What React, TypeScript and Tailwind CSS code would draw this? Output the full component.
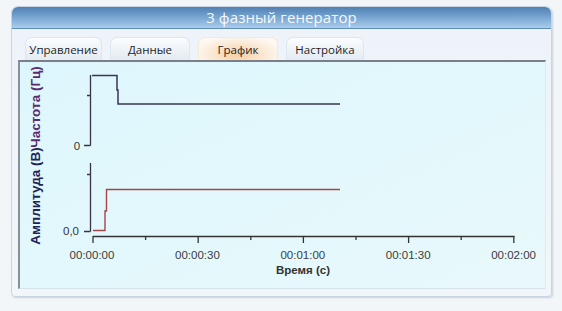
import React from 'react';

const tabs = [
    { id: 'ctrl', label: 'Управление', w: 'w-[77px]' },
    { id: 'data', label: 'Данные', w: 'w-[80px]' },
    { id: 'graph', label: 'График', w: 'w-[80px]' },
    { id: 'cfg', label: 'Настройка', w: 'w-[78px]' },
];

// x axis: 00:00:00 at x=93, 00:02:00 at x=514 (page coords)
const xTicks = Array.from({ length: 9 }, (_, i) => 93 + i * 52.6);
const xLabels = ['00:00:00', '00:00:30', '00:01:00', '00:01:30', '00:02:00'];
const font = "'Liberation Sans', Arial, sans-serif";

const Chart: React.FC = () => (
    <svg className="absolute inset-0" width="526" height="227" viewBox="20 62 526 227">
        {/* Y axis labels (overlapping, as in the original) */}
        <text
            x={35} y={107}
            transform="rotate(-90 35 107)"
            textAnchor="middle" dominantBaseline="central"
            fontFamily={font} fontWeight="bold" fontSize="13.5"
            fill="#5b2a6e"
        >
            Частота (Гц)
        </text>
        <text
            x={35} y={196}
            transform="rotate(-90 35 196)"
            textAnchor="middle" dominantBaseline="central"
            fontFamily={font} fontWeight="bold" fontSize="13.5"
            fill="#1f2257"
        >
            Амплитуда (В)
        </text>

        {/* TOP PLOT (frequency) */}
        <path d="M90.5 75 V145.5 M84 145.5 H90.5 M87 95.5 H90.5" stroke="#3b3346" strokeWidth="1.3" fill="none" />
        <text x={77} y={146} textAnchor="middle" dominantBaseline="central" fontFamily={font} fontSize="11.5" fill="#333">0</text>
        <path d="M92 75.5 H117 V90 H118 V104 H340" stroke="#3a3650" strokeWidth="1.5" fill="none" />

        {/* BOTTOM PLOT (amplitude) */}
        <path d="M90.5 163 V231.5 M84 231.5 H90.5 M87 174.5 H90.5" stroke="#3b3346" strokeWidth="1.3" fill="none" />
        <text x={71} y={231} textAnchor="middle" dominantBaseline="central" fontFamily={font} fontSize="11.5" fill="#333">0,0</text>
        <path d="M93 230.5 H105 V211 H106.5 V189.5 H340" stroke="#a3474a" strokeWidth="1.4" fill="none" />

        {/* X AXIS */}
        <path d="M93 236.5 H514.5" stroke="#333" strokeWidth="1.3" fill="none" />
        {xTicks.map((x, i) => (
            <line key={i} x1={x} x2={x} y1={236} y2={i % 2 === 0 ? 243 : 240} stroke="#333" strokeWidth="1.3" />
        ))}
        {xLabels.map((l, i) => (
            <text key={l} x={92 + i * 105.4} y={255} textAnchor="middle" dominantBaseline="central" fontFamily={font} fontSize="11.5" fill="#3a3a3a">
                {l}
            </text>
        ))}
        <text x={303} y={270} textAnchor="middle" dominantBaseline="central" fontFamily={font} fontWeight="bold" fontSize="11.5" fill="#333">
            Время (с)
        </text>
    </svg>
);

export default function App() {
    const active = 'graph';

    return (
        <div className="w-[562px] h-[311px] bg-[#f3f6f9] pt-[6px] pl-[11px] overflow-hidden" style={{ fontFamily: "'Open Sans', 'Noto Sans', sans-serif" }}>
            {/* WINDOW */}
            <div className="w-[541px] h-[291px] rounded-t-[7px] rounded-b-[4px] border border-[#c9d6e2] bg-gradient-to-b from-[#edf3f9] to-[#f1f6fb] shadow-[1px_1px_2px_rgba(120,140,160,0.35)] flex flex-col">
                {/* TITLE BAR */}
                <div className="h-[22px] rounded-t-[6px] bg-gradient-to-b from-[#4f80b3] via-[#7aa6d2] to-[#a9cdec] border-b border-[#5f8cb9] flex items-center justify-center">
                    <span className="text-[15px] leading-none text-white/95 tracking-[0.1px]">3 фазный генератор</span>
                </div>

                {/* TABS */}
                <div className="flex gap-[8px] pl-[13px] pt-[8px] h-[31px]">
                    {tabs.map(t => (
                        <div
                            key={t.id}
                            className={`${t.w} h-[23px] rounded-t-[7px] border border-b-0 flex items-end justify-center pb-[2px] text-[11.5px] text-[#1e1e1e] ${
                                t.id === active
                                    ? 'border-[#f3ead8] bg-[radial-gradient(ellipse_at_50%_75%,#f6cfa4_0%,#fae7d2_45%,#fdf8f1_80%)]'
                                    : 'border-[#dde7f0] bg-gradient-to-b from-[#fbfdff] via-[#eef3f8] to-[#e3ebf3]'
                            }`}
                        >
                            {t.label}
                        </div>
                    ))}
                </div>

                {/* CONTENT PANEL */}
                <div className="ml-[6px] mr-[5px] h-[229px] relative border-t-2 border-l-2 border-t-[#7b8088] border-l-[#8a8f96] border-r border-b border-r-[#dfe8ef] border-b-[#d8e2ea] bg-gradient-to-br from-[#ddf6fd] via-[#e3f8fc] to-[#e9f8fb]">
                    <Chart />
                </div>
            </div>
        </div>
    );
}
